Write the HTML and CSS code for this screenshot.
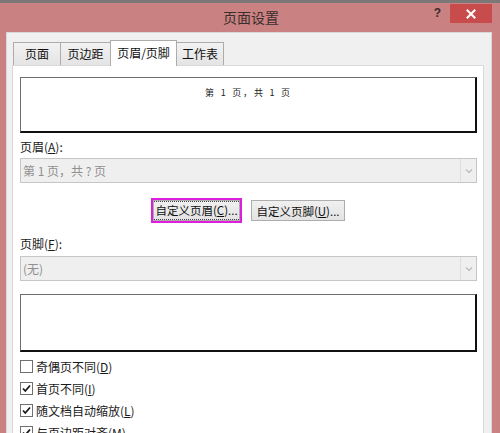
FILE: index.html
```html
<!DOCTYPE html>
<html lang="zh-CN">
<head>
<meta charset="utf-8">
<title>页面设置</title>
<link rel="stylesheet" href="styles.css">
</head>
<body>
<div class="window">
  <div class="topline"></div>
  <div class="titlebar">
    <div class="spacer"></div>
    <div class="title">页面设置</div>
    <div class="controls">
      <span class="help">?</span>
      <span class="close">
        <svg width="10" height="10" viewBox="0 0 10 10"><path d="M1.5 1.5 L8.5 8.5 M8.5 1.5 L1.5 8.5" stroke="#fff" stroke-width="2" stroke-linecap="square"/></svg>
      </span>
    </div>
  </div>
  <div class="client">
    <div class="tabs">
      <div class="tab t1">页面</div>
      <div class="tab t2">页边距</div>
      <div class="tab active">页眉/页脚</div>
      <div class="tab t4">工作表</div>
    </div>
    <div class="panel">
      <div class="preview header-preview"><span class="preview-text">第 1 页，共 1 页</span></div>
      <div class="field-label label-header">页眉(<u>A</u>):</div>
      <div class="combo">
        <span class="combo-text">第 1 页，共 ? 页</span>
        <span class="combo-arrow"><svg width="8" height="6" viewBox="0 0 8 6"><path d="M1 1.5 L4 4.5 L7 1.5" fill="none" stroke="#b8b8b8" stroke-width="1.2"/></svg></span>
      </div>
      <div class="btnrow">
        <div class="btn focused"><span class="focusrect">自定义页眉(<u>C</u>)...</span></div>
        <div class="btn b2">自定义页脚(<u>U</u>)...</div>
      </div>
      <div class="field-label label-footer">页脚(<u>F</u>):</div>
      <div class="combo combo-footer">
        <span class="combo-text">(无)</span>
        <span class="combo-arrow"><svg width="8" height="6" viewBox="0 0 8 6"><path d="M1 1.5 L4 4.5 L7 1.5" fill="none" stroke="#b8b8b8" stroke-width="1.2"/></svg></span>
      </div>
      <div class="preview footer-preview"></div>
      <div class="checks">
        <div class="check"><span class="box"></span><span>奇偶页不同(<u>D</u>)</span></div>
        <div class="check"><span class="box"><svg width="11" height="11" viewBox="0 0 11 11"><path d="M2 5.5 L4.3 8 L9 2.5" fill="none" stroke="#1a1a1a" stroke-width="1.8"/></svg></span><span>首页不同(<u>I</u>)</span></div>
        <div class="check"><span class="box"><svg width="11" height="11" viewBox="0 0 11 11"><path d="M2 5.5 L4.3 8 L9 2.5" fill="none" stroke="#1a1a1a" stroke-width="1.8"/></svg></span><span>随文档自动缩放(<u>L</u>)</span></div>
        <div class="check"><span class="box"><svg width="11" height="11" viewBox="0 0 11 11"><path d="M2 5.5 L4.3 8 L9 2.5" fill="none" stroke="#1a1a1a" stroke-width="1.8"/></svg></span><span>与页边距对齐(<u>M</u>)</span></div>
      </div>
    </div>
  </div>
</div>
</body>
</html>
```

FILE: styles.css
```css
html, body {
  margin: 0;
  padding: 0;
}
body {
  width: 500px;
  height: 433px;
  overflow: hidden;
  background: #c98181;
  font-family: "Noto Sans CJK SC", "Noto Sans", sans-serif;
  font-size: 12px;
  color: #1a1a1a;
}
.window {
  display: flex;
  flex-direction: column;
  height: 433px;
}
.topline {
  height: 3px;
  background: #7c7878;
  flex: none;
}
.titlebar {
  height: 29px;
  flex: none;
  display: grid;
  grid-template-columns: 1fr auto 1fr;
}
.title {
  font-size: 14px;
  line-height: 29px;
  color: #3a2e2e;
  padding-left: 2px;
}
.controls {
  display: flex;
  justify-content: flex-end;
  align-items: flex-start;
  padding-top: 1px;
  padding-right: 8px;
}
.help {
  font-family: "Liberation Sans", sans-serif;
  font-weight: bold;
  font-size: 12px;
  color: #3a2a2a;
  line-height: 18px;
  margin-right: 9px;
}
.close {
  width: 42px;
  height: 19px;
  background: #c94c4c;
  display: flex;
  align-items: center;
  justify-content: center;
}
.client {
  flex: 1;
  margin: 0 8px 0 6px;
  background: #f0f0f0;
  border: 1px solid #dcd8d8;
  border-bottom: none;
  padding: 7px 7px 0 5px;
  display: flex;
  flex-direction: column;
  min-height: 0;
}
.tabs {
  display: flex;
  align-items: flex-end;
  height: 26px;
  margin-bottom: -1px;
  padding-left: 1px;
  flex: none;
}
.tab {
  height: 22px;
  margin-bottom: 1px;
  border: 1px solid #acacac;
  border-bottom: none;
  background: linear-gradient(#f2f2f2, #e4e4e4);
  display: flex;
  align-items: center;
  justify-content: center;
  line-height: 1;
  color: #111;
}
.tab + .tab {
  margin-left: -1px;
}
.t1 { width: 46px; }
.t2 { width: 49px; }
.t4 { width: 46px; }
.tab.active {
  position: relative;
  z-index: 2;
  width: 67px;
  height: 26px;
  margin-bottom: 0;
  background: #fff;
  padding-bottom: 2px;
  box-sizing: border-box;
}
.panel {
  flex: 1;
  background: #fff;
  border: 1px solid #d9d9d9;
  border-bottom: none;
  padding: 11px 6px 0 7px;
  display: flex;
  flex-direction: column;
  min-height: 0;
  overflow: hidden;
}
.preview {
  box-sizing: border-box;
  border-top: 1px solid #6e6e6e;
  border-left: 1px solid #6e6e6e;
  border-right: 2px solid #111;
  border-bottom: 2px solid #111;
  background: #fff;
  flex: none;
}
.header-preview {
  height: 56px;
  display: flex;
  justify-content: center;
  padding-top: 9px;
}
.preview-text {
  font-size: 9px;
  line-height: 12px;
  letter-spacing: 1.8px;
  word-spacing: 1px;
  color: #222;
  margin-left: 1px;
}
.field-label {
  line-height: 16px;
  color: #1a1a1a;
  flex: none;
}
.label-header { margin-top: 6px; }
.label-footer { margin-top: 15px; }
.combo {
  box-sizing: border-box;
  height: 25px;
  margin-top: 3px;
  border: 1px solid #c6c6c6;
  background: #efefef;
  display: flex;
  align-items: stretch;
  flex: none;
}
.combo-footer { margin-top: 4px; }
.combo-text {
  flex: 1;
  color: #8f8f8f;
  padding-left: 2px;
  line-height: 23px;
}
.combo-arrow {
  width: 15px;
  border-left: 1px solid #dedede;
  display: flex;
  align-items: center;
  justify-content: center;
}
.btnrow {
  display: flex;
  justify-content: center;
  align-items: center;
  gap: 11px;
  margin-top: 17px;
  height: 21px;
  flex: none;
  padding-left: 1px;
}
.btn {
  box-sizing: border-box;
  height: 21px;
  border: 1px solid #adadad;
  background: linear-gradient(#f0f0f0, #e3e3e3);
  display: flex;
  align-items: center;
  justify-content: center;
  color: #111;
  font-size: 11.5px;
  white-space: nowrap;
}
.btn.focused {
  width: 87px;
  outline: 2px solid #dc1fdc;
}
.focusrect {
  outline: 1px dotted #444;
  outline-offset: 1px;
  padding: 0 1px;
  line-height: 15px;
}
.b2 {
  width: 94px;
}
.footer-preview {
  height: 58px;
  margin-top: 13px;
}
.checks {
  display: flex;
  flex-direction: column;
  margin-top: 3px;
  flex: none;
}
.check {
  height: 22px;
  display: flex;
  align-items: center;
  gap: 3px;
  color: #1a1a1a;
}
.box {
  box-sizing: border-box;
  width: 13px;
  height: 13px;
  border: 1px solid #707070;
  background: #fff;
  display: flex;
  align-items: center;
  justify-content: center;
}
u {
  text-decoration-thickness: 1px;
  text-underline-offset: 1px;
}
```
